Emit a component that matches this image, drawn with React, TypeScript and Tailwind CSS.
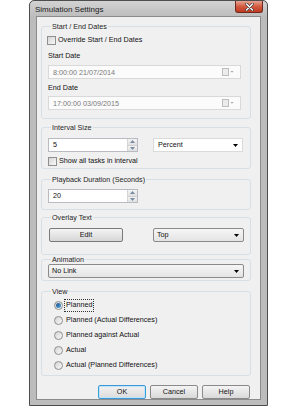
import React from "react";

const font = { fontFamily: '"Liberation Sans", Arial, sans-serif' };

function Arrow({ color = "#000" }: { color?: string }) {
  return (
    <svg width="5" height="3" viewBox="0 0 5 3" className="block">
      <path d="M0 0H5L2.5 3Z" fill={color} />
    </svg>
  );
}

function CheckBox() {
  return (
    <span className="block w-[9px] h-[9px] border border-[#8e8f8f] bg-linear-to-br from-[#d6d6d6] to-[#f8f8f8] shrink-0" />
  );
}

function Radio({ checked }: { checked?: boolean }) {
  return (
    <span className="flex items-center justify-center w-[9px] h-[9px] rounded-full border border-[#8e8f8f] bg-linear-to-br from-[#d4d4d4] to-[#f9f9f9] shrink-0">
      {checked && (
        <span className="block w-[5px] h-[5px] rounded-full bg-linear-to-br from-[#1a4d86] to-[#5aa8e0]" />
      )}
    </span>
  );
}

function DateInput({ value }: { value: string }) {
  return (
    <div className="flex items-center w-[193px] h-[14px] border border-[#d9d9d9] bg-[#fbfbfb] pl-[4px] pr-[6px] text-[#7a7a7a]">
      <span className="flex-1 leading-none">{value}</span>
      <svg width="12" height="8" viewBox="0 0 12 8" className="block">
        <rect x="0.5" y="0.5" width="6" height="7" fill="#ececec" stroke="#bdbdbd" />
        <path d="M8.5 3H11.5L10 4.8Z" fill="#a8a8a8" />
      </svg>
    </div>
  );
}

function SpinInput({ value }: { value: string }) {
  return (
    <div className="flex w-[90px] h-[14px] border border-[#b8bcc2] bg-white">
      <span className="flex-1 pl-[4px] leading-[12px]">{value}</span>
      <div className="flex flex-col w-[10px] border-l border-[#d5d5d5]">
        <div className="flex-1 flex items-center justify-center bg-linear-to-b from-[#f4f4f4] to-[#e0e0e0] border-b border-[#d0d0d0]">
          <svg width="5" height="3" viewBox="0 0 5 3"><path d="M0 3H5L2.5 0Z" fill="#7a8aa0" /></svg>
        </div>
        <div className="flex-1 flex items-center justify-center bg-linear-to-b from-[#f4f4f4] to-[#e0e0e0]">
          <svg width="5" height="3" viewBox="0 0 5 3"><path d="M0 0H5L2.5 3Z" fill="#7a8aa0" /></svg>
        </div>
      </div>
    </div>
  );
}

function Group({ label, children, className = "" }: { label: string; children: React.ReactNode; className?: string }) {
  return (
    <fieldset className={`w-[210px] border border-[#d5dfe5] rounded-[3px] pl-[6px] ${className}`}>
      <legend className="ml-[3px] px-[1px] leading-[9px] text-[#1e1e1e]">{label}</legend>
      {children}
    </fieldset>
  );
}

function Button({ label, def }: { label: string; def?: boolean }) {
  return (
    <div
      className={`flex items-center justify-center w-[48px] h-[14px] rounded-[2px] border ${
        def
          ? "border-[#3c9ad8] shadow-[inset_0_0_0_1px_#bfe4fb] bg-linear-to-b from-[#f2f2f2] to-[#dcdcdc]"
          : "border-[#8a8a8a] bg-linear-to-b from-[#f4f4f4] to-[#d9d9d9]"
      }`}
    >
      {label}
    </div>
  );
}

export default function App() {
  return (
    <div className="w-[296px] h-[409px] bg-white text-[7.2px] text-[#111]" style={font}>
      <div className="ml-[29px] w-[239px] h-[406px] border border-[#4d4d4d] rounded-t-[5px] bg-[#bcbcbc] flex flex-col">
        {/* Title bar */}
        <div className="flex h-[16px] bg-linear-to-b from-[#d3d3d3] to-[#bdbdbd] rounded-t-[5px]">
          <span className="pl-[5px] pt-[4px] text-[8px] leading-[10px] text-[#1a1a1a]">Simulation Settings</span>
          <div className="flex-1" />
          <div className="mr-[4px] flex items-center justify-center w-[28px] h-[12px] rounded-b-[3px] border border-t-0 border-[#6e2a1e] bg-linear-to-b from-[#e6a393] via-[#d25a40] to-[#c0391e]">
            <svg width="9" height="8" viewBox="0 0 9 8">
              <path d="M1.5 1L7.5 7M7.5 1L1.5 7" stroke="#3a3a3a" strokeWidth="2.6" strokeLinecap="round" />
              <path d="M1.5 1L7.5 7M7.5 1L1.5 7" stroke="#ffffff" strokeWidth="1.4" strokeLinecap="round" />
            </svg>
          </div>
        </div>
        {/* Client */}
        <div className="mx-[6px] flex-1 border border-[#8c8c8c] bg-[#f0f0f0] pl-[4px] flex flex-col">
          <Group label="Start / End Dates" className="mt-[5px] pb-[8px]">
            <div className="flex items-center gap-[2px] h-[9px] mt-[5px] -ml-[1px]">
              <CheckBox />
              <span>Override Start / End Dates</span>
            </div>
            <div className="h-[9px] leading-[9px] mt-[6px]">Start Date</div>
            <div className="mt-[5px]">
              <DateInput value="8:00:00 21/07/2014" />
            </div>
            <div className="h-[9px] leading-[9px] mt-[4px]">End Date</div>
            <div className="mt-[4px]">
              <DateInput value="17:00:00 03/09/2015" />
            </div>
          </Group>

          <Group label="Interval Size" className="mt-[4px] pb-[2px]">
            <div className="flex mt-[6px]">
              <SpinInput value="5" />
              <div className="ml-[15px] flex items-center w-[90px] h-[14px] border border-[#dadada] bg-white pl-[4px] pr-[4px]">
                <span className="flex-1">Percent</span>
                <Arrow />
              </div>
            </div>
            <div className="flex items-center gap-[2px] h-[9px] mt-[5px]">
              <CheckBox />
              <span>Show all tasks in interval</span>
            </div>
          </Group>

          <Group label="Playback Duration (Seconds)" className="mt-[6px] pb-[6px]">
            <div className="mt-[5px]">
              <SpinInput value="20" />
            </div>
          </Group>

          <Group label="Overlay Text" className="mt-[3px] pb-[12px]">
            <div className="flex mt-[6px]">
              <div className="ml-[1px] flex items-center justify-center w-[74px] h-[14px] rounded-[2px] border border-[#7a7a7a] bg-linear-to-b from-[#f4f4f4] to-[#d6d6d6]">
                Edit
              </div>
              <div className="ml-[30px] flex items-center w-[91px] h-[14px] border border-[#8a8a8a] rounded-[2px] bg-linear-to-b from-[#f6f6f6] to-[#e4e4e4] pl-[3px] pr-[4px]">
                <span className="flex-1">Top</span>
                <Arrow />
              </div>
            </div>
          </Group>

          <Group label="Animation" className="mt-0 pb-[2px]">
            <div className="flex items-center w-[196px] h-[14px] border border-[#8a8a8a] rounded-[2px] bg-linear-to-b from-[#f6f6f6] to-[#e4e4e4] pl-[3px] pr-[4px]">
              <span className="flex-1">No Link</span>
              <Arrow />
            </div>
          </Group>

          <Group label="View" className="mt-[6px] pb-[2px]">
            <div className="flex flex-col mt-[2px]">
              {[
                "Planned",
                "Planned (Actual Differences)",
                "Planned against Actual",
                "Actual",
                "Actual (Planned Differences)",
              ].map((t, i) => (
                <div key={t} className="flex items-center h-[15px] pl-[6px] gap-[2px]">
                  <Radio checked={i === 0} />
                  <span className={i === 0 ? "outline outline-1 outline-dotted outline-[#333] px-[1px]" : "px-[1px]"}>{t}</span>
                </div>
              ))}
            </div>
          </Group>

          <div className="flex justify-end gap-[4px] mt-[9px] mr-[10px]">
            <Button label="OK" def />
            <Button label="Cancel" />
            <Button label="Help" />
          </div>
        </div>
        <div className="h-[5px]" />
      </div>
    </div>
  );
}
